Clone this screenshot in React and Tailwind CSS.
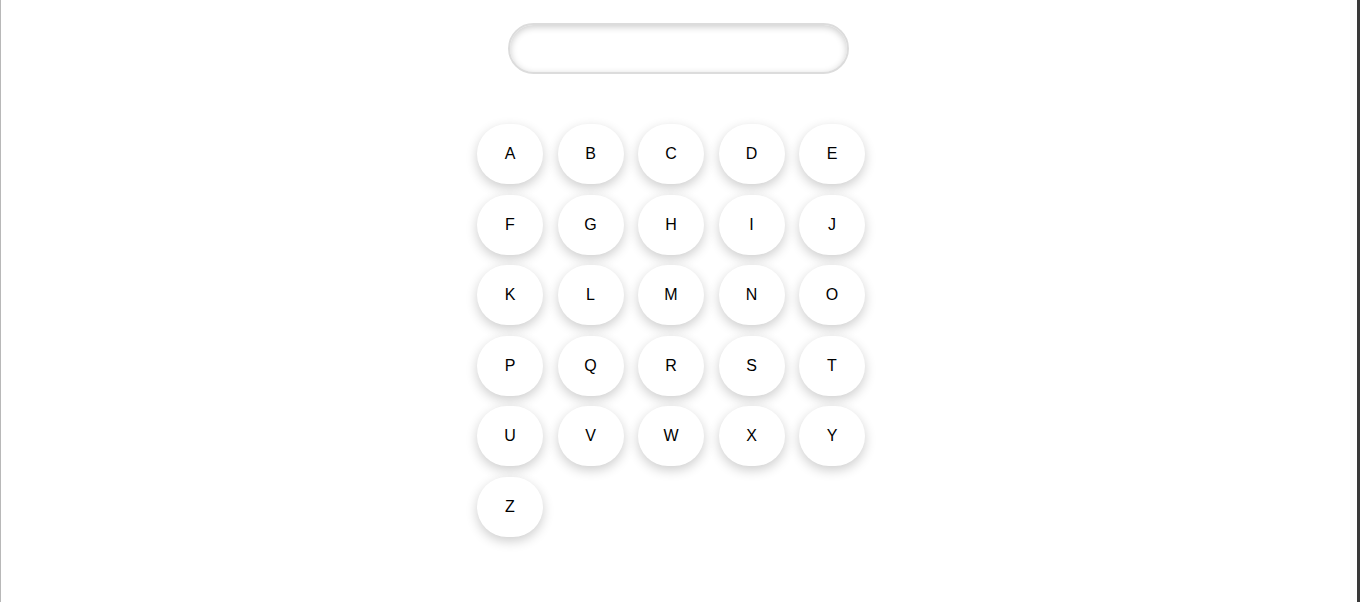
const letters = 'ABCDEFGHIJKLMNOPQRSTUVWXYZ'.split('');

const LetterButton = ({ letter }) => (
  <button className="h-[60px] w-[66px] rounded-full bg-white text-[16px] text-black shadow-[0_4px_12px_rgba(0,0,0,0.2)]">
    {letter}
  </button>
);

const App = () => (
  <div className="flex h-[602px] w-full border-r-[3px] border-l border-r-[#3a3a3a] border-l-[#b8b8b8] bg-white font-['Liberation_Sans',Arial,sans-serif]">
    <div className="flex w-full flex-col items-center pt-[23px]">
      <input
        type="text"
        className="ml-[-1px] h-[51px] w-[341px] rounded-full border-2 border-[#dcdcdc] bg-white px-6 text-[18px] shadow-[inset_0_2px_7px_rgba(0,0,0,0.2)] outline-none"
      />

      <div className="mt-[50px] w-[420px]">
        <div className="grid grid-cols-[repeat(5,66px)] gap-x-[14.5px] gap-y-[10.6px] pl-[8px]">
          {letters.map((letter) => (
            <LetterButton key={letter} letter={letter} />
          ))}
        </div>
      </div>
    </div>
  </div>
);

export default App;
